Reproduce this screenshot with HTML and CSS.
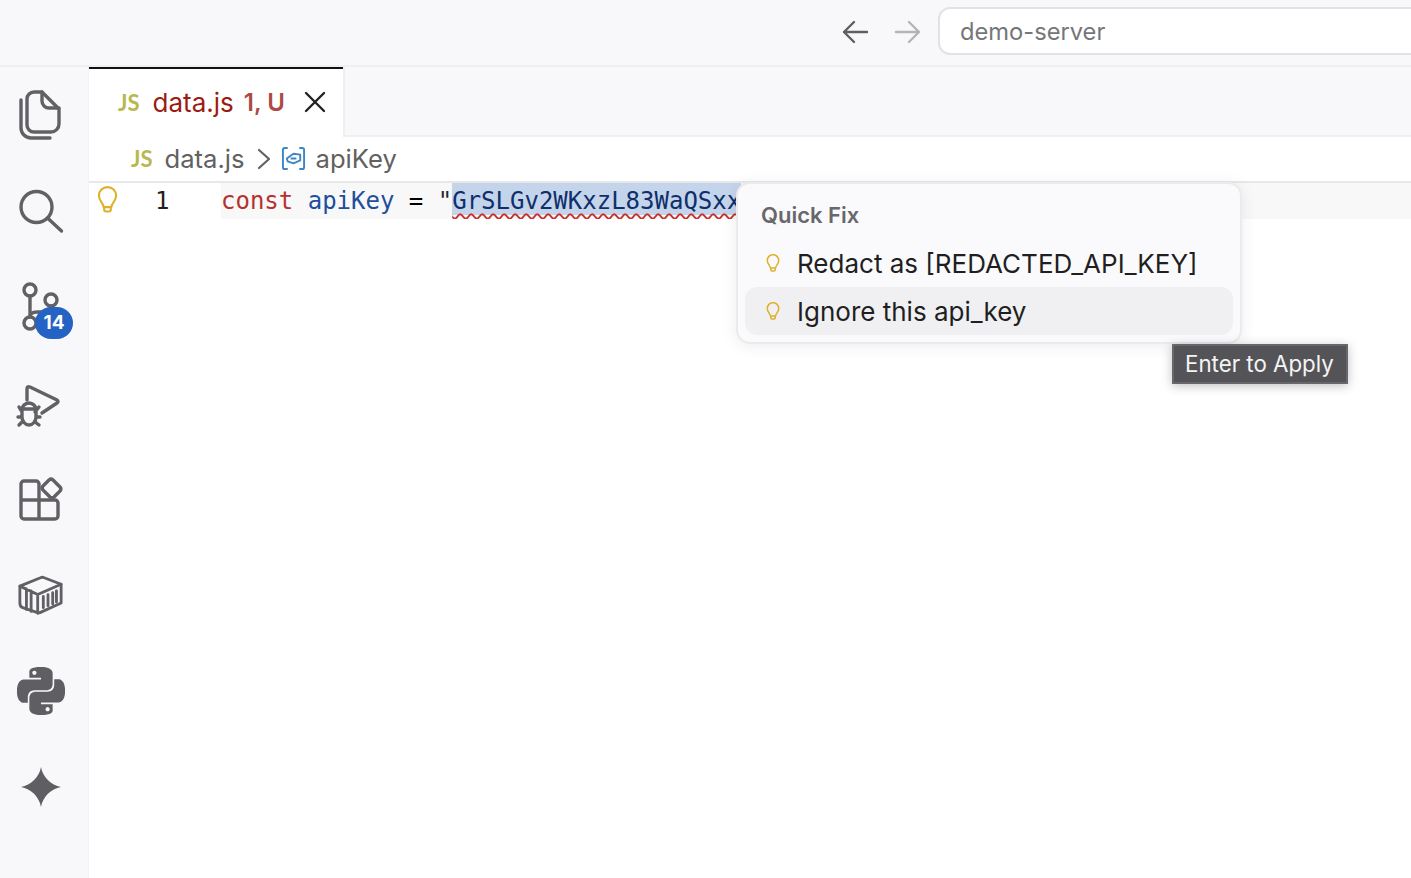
FILE: index.html
```html
<!DOCTYPE html>
<html lang="en">
<head>
<meta charset="utf-8">
<title>data.js - demo-server</title>
<link rel="stylesheet" href="styles.css">
</head>
<body>
<header class="titlebar">
  <svg class="nav nav-back" viewBox="0 0 28 28"><path d="M26 14H3M13 4 3 14l10 10"/></svg>
  <svg class="nav nav-fwd" viewBox="0 0 28 28"><path d="M2 14h23M15 4l10 10-10 10"/></svg>
  <div class="search">demo-server</div>
</header>
<div class="main">
  <nav class="activity">
    <div class="act"><svg viewBox="0 0 48 48" class="ico"><path d="M17 1h8l17 17v15a8 8 0 0 1-8 8H17a7 7 0 0 1-7-7V8a7 7 0 0 1 7-7Z"/><path d="M25 1v9a7 7 0 0 0 7 7h10"/><path d="M4 9v28a10 10 0 0 0 10 10h19"/></svg></div>
    <div class="act"><svg viewBox="0 0 48 48" class="ico"><circle cx="19.500" cy="20" r="15.500"/><path d="m30.500 31 14 13"/></svg></div>
    <div class="act"><svg viewBox="0 0 48 48" class="ico"><circle cx="13" cy="7" r="6"/><circle cx="13" cy="40" r="6"/><circle cx="34" cy="17" r="6"/><path d="M13 13v21M13 34c0-4 3-5 7-5h6c5 0 8-3 8-6"/></svg><span class="badge">14</span></div>
    <div class="act"><svg viewBox="0 0 48 48" class="ico"><path d="M10 21V10q0-3 3-2l27 13q2 2 0 3L25 34"/><path d="M5 31c0-4 3-7 7-7s7 3 7 7v7c0 4-3 8-7 8s-7-4-7-8ZM5 30h14M2 28l3 5M22 28l-4 5M1 38h2M23 38h-3M2 46l3-3M22 46l-4-3"/></svg></div>
    <div class="act"><svg viewBox="0 0 48 48" class="ico"><path d="M7 6h12a3 3 0 0 1 3 3v16h16a3 3 0 0 1 3 3v13a3 3 0 0 1-3 3H7a3 3 0 0 1-3-3V9a3 3 0 0 1 3-3ZM4 25h18v19"/><path d="m26 11 6-6a3 3 0 0 1 4 0l7 7a3 3 0 0 1 0 4l-6 6a3 3 0 0 1-4 0l-7-7a3 3 0 0 1 0-4Z"/></svg></div>
    <div class="act"><svg viewBox="0 0 48 48" class="ico ico-thin"><path d="M2 14 24 5a5 5 0 0 1 4 0l18 7v20L24 42a5 5 0 0 1-4 0L5 37q-3-1-3-5Z"/><path d="m2 14 19 9 25-11M21 23v20M9 17v22M14 19v22M27 25v12M32 23v12M37 21v12M41 19v12"/></svg></div>
    <div class="act"><svg viewBox="0 0 24 24" class="ico-fill"><path d="M14.250.18l.9.2.73.26.59.3.45.32.34.34.25.34.16.33.1.3.04.26.02.2-.01.13V8.500l-.05.63-.13.55-.21.46-.26.38-.3.31-.33.25-.35.19-.35.14-.33.1-.3.07-.26.04-.21.02H8.770l-.69.05-.59.14-.5.22-.41.27-.33.32-.27.35-.2.36-.15.37-.1.35-.07.32-.04.27-.02.21v3.060H3.170l-.21-.03-.28-.07-.32-.12-.35-.18-.36-.26-.36-.36-.35-.46-.32-.59-.28-.73-.21-.88-.14-1.050-.05-1.230.06-1.220.16-1.040.24-.87.32-.71.36-.57.4-.44.42-.33.42-.24.4-.16.36-.1.32-.05.24-.01h.16l.06.01h8.160v-.83H6.180l-.01-2.750-.02-.37.05-.34.11-.31.17-.28.25-.26.31-.23.38-.2.44-.18.51-.15.58-.12.64-.1.71-.06.77-.04.84-.02 1.270.05zm-6.300 1.980l-.23.33-.08.41.08.41.23.34.33.22.41.09.41-.09.33-.22.23-.34.08-.41-.08-.41-.23-.33-.33-.22-.41-.09-.41.09zm13.090 3.950l.28.06.32.12.35.18.36.27.36.35.35.47.32.59.28.73.21.88.14 1.040.05 1.230-.06 1.230-.16 1.040-.24.86-.32.71-.36.57-.4.45-.42.33-.42.24-.4.16-.36.09-.32.05-.24.02-.16-.01h-8.220v.82h5.840l.01 2.760.02.36-.05.34-.11.31-.17.29-.25.25-.31.24-.38.2-.44.17-.51.15-.58.13-.64.09-.71.07-.77.04-.84.01-1.270-.04-1.070-.14-.9-.2-.73-.25-.59-.3-.45-.33-.34-.34-.25-.34-.16-.33-.1-.3-.04-.25-.02-.2.01-.13v-5.340l.05-.64.13-.54.21-.46.26-.38.3-.32.33-.24.35-.2.35-.14.33-.1.3-.06.26-.04.21-.02.13-.01h5.840l.69-.05.59-.14.5-.21.41-.28.33-.32.27-.35.2-.36.15-.36.1-.35.07-.32.04-.28.02-.21V6.070h2.090l.14.01zm-6.470 14.250l-.23.33-.08.41.08.41.23.33.33.23.41.08.41-.08.33-.23.23-.33.08-.41-.08-.41-.23-.33-.33-.23-.41-.08-.41.08z"/></svg></div>
    <div class="act"><svg viewBox="0 0 48 48" class="ico-fill ico-star"><path d="M24 0C26 12 36 22 48 24 36 26 26 36 24 48 22 36 12 26 0 24 12 22 22 12 24 0Z"/></svg></div>
  </nav>
  <section class="editor">
    <div class="tabs">
      <div class="tab">
        <span class="js">JS</span>
        <span class="tab-name">data.js</span>
        <span class="tab-status">1, U</span>
        <svg class="close" viewBox="0 0 22 22"><path d="m2 2 18 18M20 2 2 20"/></svg>
      </div>
    </div>
    <div class="crumbs">
      <span class="js">JS</span>
      <span class="crumb-text">data.js</span>
      <svg class="chev" viewBox="0 0 14 22"><path d="m2 2 10 9-10 9"/></svg>
      <svg class="sym" viewBox="0 0 26 26"><path d="M7 2H4a2 2 0 0 0-2 2v18a2 2 0 0 0 2 2h3M19 2h3a2 2 0 0 1 2 2v18a2 2 0 0 1-2 2h-3"/><path d="m6 13 7-5 7 1v6l-7 3-6-2ZM10 13h6"/></svg>
      <span class="crumb-text">apiKey</span>
    </div>
    <div class="code">
      <div class="line">
        <svg class="bulb bulb-gutter" viewBox="0 0 22 28"><path d="M7 22c0-4-5-6-5-12a9 9 0 0 1 18 0c0 6-5 8-5 12ZM7.500 22v2.500a2 2 0 0 0 2 2h3a2 2 0 0 0 2-2V22"/></svg>
        <span class="lineno">1</span>
        <div class="linetext"><span class="k">const</span> <span class="v">apiKey</span> <span class="o">=</span> <span class="q">"</span><span class="sel">GrSLGv2WKxzL83WaQSxx</span></div>
      </div>
    </div>
    <div class="popup">
      <div class="popup-title">Quick Fix</div>
      <div class="fix">
        <svg class="bulb" viewBox="0 0 22 28"><path d="M7 22c0-4-5-6-5-12a9 9 0 0 1 18 0c0 6-5 8-5 12ZM7.500 22v2.500a2 2 0 0 0 2 2h3a2 2 0 0 0 2-2V22"/></svg>
        <span>Redact as [REDACTED_API_KEY]</span>
      </div>
      <div class="fix fix-active">
        <svg class="bulb" viewBox="0 0 22 28"><path d="M7 22c0-4-5-6-5-12a9 9 0 0 1 18 0c0 6-5 8-5 12ZM7.500 22v2.500a2 2 0 0 0 2 2h3a2 2 0 0 0 2-2V22"/></svg>
        <span>Ignore this api_key</span>
      </div>
    </div>
    <div class="tooltip">Enter to Apply</div>
  </section>
</div>
</body>
</html>
```
FILE: styles.css
```css
* { box-sizing: border-box; }
html, body { margin: 0; height: 100%; overflow: hidden; }
body {
  width: 1411px; height: 878px; background: #fff; display: flex; flex-direction: column;
  font-family: Inter, "Liberation Sans", sans-serif; color: #1f1f1f;
}
.titlebar {
  height: 67px; flex: none; background: #f8f8fa; border-bottom: 2px solid #efeff1;
  display: flex; align-items: center; padding: 0 0 2px 841px; overflow: hidden;
}
.nav { width: 28px; height: 28px; fill: none; stroke-width: 2.400; stroke-linecap: round; stroke-linejoin: round; flex: none; }
.nav-back { stroke: #5f5f63; }
.nav-fwd { stroke: #b5b5b8; margin-left: 25px; }
.search {
  width: 600px; height: 48px; margin: 0 0 2px 16px; flex: none; background: #fff;
  border: 2px solid #e2e2e4; border-radius: 12px; padding-left: 20px; color: #767678;
  font-size: 23.700px; line-height: 46px;
}
.main { flex: 1; display: flex; min-height: 0; }
.activity {
  width: 89px; flex: none; background: #f8f8fa; border-right: 1px solid #f3f3f5;
  display: flex; flex-direction: column;
}
.act { height: 96px; flex: none; display: flex; align-items: center; justify-content: center; position: relative; padding-right: 7px; }
.ico { width: 48px; height: 48px; fill: none; stroke: #616165; stroke-width: 3.400; stroke-linecap: round; stroke-linejoin: round; overflow: visible; }
.ico-thin { width: 45px; height: 45px; stroke-width: 3; }
.ico-fill { width: 48px; height: 48px; fill: #5f5f63; }
.ico-star { width: 40px; height: 40px; }
.badge {
  position: absolute; left: 35px; top: 48px; width: 38px; height: 32px; border-radius: 16px;
  background: #2462c4; color: #fff; font-size: 19px; font-weight: 700; line-height: 32px; text-align: center;
}
.editor { flex: 1; min-width: 0; display: flex; flex-direction: column; position: relative; }
.tabs { height: 70px; flex: none; background: #f8f8fa; border-bottom: 2px solid #efeff1; display: flex; }
.tab {
  width: 256px; height: 70px; background: #fff; border-right: 2px solid #efeff1; position: relative;
  display: flex; align-items: center; padding: 0 0 0 29px;
}
.tab::before { content: ""; position: absolute; left: 0; right: 0; top: 0; height: 2px; background: #111; }
.js { font-family: Lato, sans-serif; font-size: 22px; font-weight: 700; color: #b7b84f; flex: none; }
.tab-name { color: #9a1c14; margin-left: 13px; font-size: 26px; }
.tab-status { color: #ad4a44; margin-left: 10px; font-size: 24px; font-weight: 600; }
.close { width: 22px; height: 22px; margin-left: 19px; fill: none; stroke: #222; stroke-width: 2.400; stroke-linecap: round; flex: none; }
.crumbs { height: 46px; flex: none; display: flex; align-items: center; padding: 0 0 1px 42px; border-bottom: 2px solid #e8e8ea; font-size: 25.600px; color: #616161; }
.crumb-text { margin-left: 12px; }
.crumb-text:last-child { margin-left: 14px; }
.chev { width: 14px; height: 22px; margin-left: 12px; fill: none; stroke: #616161; stroke-width: 2.200; stroke-linecap: round; stroke-linejoin: round; flex: none; }
.sym { width: 25px; height: 25px; margin-left: 10px; margin-right: -4px; fill: none; stroke: #3d86c6; stroke-width: 2; stroke-linejoin: round; flex: none; }
.code { flex: 1; font-family: "DejaVu Sans Mono", monospace; font-size: 24px; }
.line { height: 36px; display: flex; align-items: center; position: relative; }
.bulb { width: 14px; height: 18px; fill: none; stroke: #ddb12b; stroke-width: 2.400; flex: none; stroke-linejoin: round; }
.bulb-gutter { width: 21px; height: 27px; margin-left: 8px; margin-top: -4px; stroke-width: 2.200; }
.lineno { width: 14px; margin-left: 37px; color: #1f1f1f; flex: none; }
.linetext { flex: 1; margin-left: 52px; height: 36px; line-height: 36px; background: #f8f8f9; white-space: pre; overflow: hidden; color: #000; }
.k { color: #b5322e; }
.v { color: #1d4f9c; }
.q { color: #1f2937; }
.sel {
  display: inline-block; vertical-align: top; height: 32px; background: #c4d4eb; color: #0f2f6b;
  text-decoration: underline wavy #c8302c 2px; text-underline-offset: 4px;
}
.popup {
  position: absolute; left: 647px; top: 115px; width: 506px; height: 162px; background: #fafafc;
  border: 2px solid #ebebee; border-radius: 14px; padding: 7px;
  box-shadow: 0 2px 16px rgba(0,0,0,.08);
}
.popup-title { height: 48px; padding-left: 16px; font-size: 22px; font-weight: 600; color: #68686b; line-height: 48px; }
.fix { height: 48px; display: flex; align-items: center; gap: 17px; padding-left: 21px; font-size: 26px; color: #1f1f1f; border-radius: 12px; }
.fix-active { background: #f0f0f2; }
.tooltip {
  position: absolute; left: 1083px; top: 277px; width: 176px; height: 40px; background: #545458;
  border: 2px solid #68686c; color: #f4f4f5; font-size: 22.300px; line-height: 35px; padding-left: 11px;
  box-shadow: 0 2px 10px rgba(0,0,0,.25); white-space: nowrap;
}
```
